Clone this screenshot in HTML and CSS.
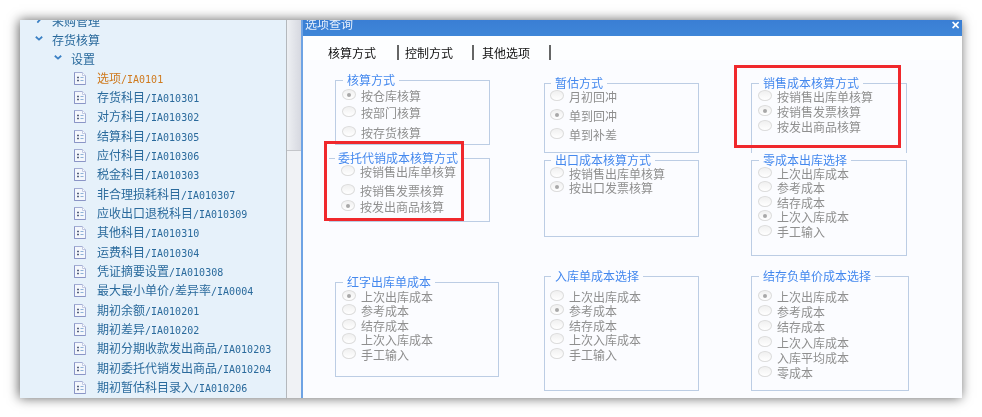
FILE: index.html
```html
<!DOCTYPE html>
<html lang="zh-CN">
<head>
<meta charset="utf-8">
<title>选项查询</title>
<link rel="stylesheet" href="styles.css">
</head>
<body>
<svg class="defs" width="0" height="0" aria-hidden="true">
  <defs>
    <symbol id="leaf" viewBox="0 0 12 13">
      <path d="M.5.5H8.500L11.500 3.500V12.500H.5Z" fill="#f4f7fc" stroke="#a3add4"/>
      <path d="M.5.5V12.500H11.500" fill="none" stroke="#8a95c6"/>
      <path d="M8.500.5V3.500H11.500" fill="#fff" stroke="#c0c8e2"/>
      <path d="M3 5.500H5M3 8.500H5" stroke="#56607c"/>
      <path d="M4 4.500V6.500M4 7.500V9.500" stroke="#56607c"/>
      <path d="M6.500 5.500H9.500M6.500 8.500H9.500" stroke="#8fb2d8"/>
    </symbol>
    <symbol id="chev" viewBox="0 0 8 5">
      <path d="M.8.8L4 3.600 7.200.8" fill="none" stroke="#3b80c4" stroke-width="1.800"/>
    </symbol>
  </defs>
</svg>
<div class="window">
  <nav class="sidebar">
    <ul class="tree">
      <li class="node lv1"><svg class="chev chev-side"><use href="#chev"/></svg><span>采购管理</span></li>
      <li class="node lv1"><svg class="chev"><use href="#chev"/></svg><span>存货核算</span></li>
      <li class="node lv2"><svg class="chev"><use href="#chev"/></svg><span>设置</span></li>
      <li class="node leaf active"><svg class="doc"><use href="#leaf"/></svg><span>选项<span class="code">/IA0101</span></span></li>
      <li class="node leaf"><svg class="doc"><use href="#leaf"/></svg><span>存货科目<span class="code">/IA010301</span></span></li>
      <li class="node leaf"><svg class="doc"><use href="#leaf"/></svg><span>对方科目<span class="code">/IA010302</span></span></li>
      <li class="node leaf"><svg class="doc"><use href="#leaf"/></svg><span>结算科目<span class="code">/IA010305</span></span></li>
      <li class="node leaf"><svg class="doc"><use href="#leaf"/></svg><span>应付科目<span class="code">/IA010306</span></span></li>
      <li class="node leaf"><svg class="doc"><use href="#leaf"/></svg><span>税金科目<span class="code">/IA010303</span></span></li>
      <li class="node leaf"><svg class="doc"><use href="#leaf"/></svg><span>非合理损耗科目<span class="code">/IA010307</span></span></li>
      <li class="node leaf"><svg class="doc"><use href="#leaf"/></svg><span>应收出口退税科目<span class="code">/IA010309</span></span></li>
      <li class="node leaf"><svg class="doc"><use href="#leaf"/></svg><span>其他科目<span class="code">/IA010310</span></span></li>
      <li class="node leaf"><svg class="doc"><use href="#leaf"/></svg><span>运费科目<span class="code">/IA010304</span></span></li>
      <li class="node leaf"><svg class="doc"><use href="#leaf"/></svg><span>凭证摘要设置<span class="code">/IA010308</span></span></li>
      <li class="node leaf"><svg class="doc"><use href="#leaf"/></svg><span>最大最小单价<span class="code">/</span>差异率<span class="code">/IA0004</span></span></li>
      <li class="node leaf"><svg class="doc"><use href="#leaf"/></svg><span>期初余额<span class="code">/IA010201</span></span></li>
      <li class="node leaf"><svg class="doc"><use href="#leaf"/></svg><span>期初差异<span class="code">/IA010202</span></span></li>
      <li class="node leaf"><svg class="doc"><use href="#leaf"/></svg><span>期初分期收款发出商品<span class="code">/IA010203</span></span></li>
      <li class="node leaf"><svg class="doc"><use href="#leaf"/></svg><span>期初委托代销发出商品<span class="code">/IA010204</span></span></li>
      <li class="node leaf"><svg class="doc"><use href="#leaf"/></svg><span>期初暂估科目录入<span class="code">/IA010206</span></span></li>
    </ul>
  </nav>
  <div class="scrollbar"><div class="thumb"></div></div>
  <section class="dialog">
    <header class="titlebar"><span>选项查询</span><span class="close">✕</span></header>
    <div class="tabs">
      <span class="tab tab-a">核算方式</span>
      <span class="tab tab-b">控制方式</span>
      <span class="tab tab-c">其他选项</span>
    </div>
    <div class="panes">
      <div class="col col-a">
        <fieldset class="grp g-method">
          <legend>核算方式</legend>
          <label class="opt on mt2"><i></i>按仓库核算</label>
          <label class="opt mt3"><i></i>按部门核算</label>
          <label class="opt mt6"><i></i>按存货核算</label>
        </fieldset>
        <fieldset class="grp g-consign">
          <legend>委托代销成本核算方式</legend>
          <label class="opt"><i></i>按销售出库单核算</label>
          <label class="opt mt5"><i></i>按销售发票核算</label>
          <label class="opt on mt2"><i></i>按发出商品核算</label>
        </fieldset>
        <fieldset class="grp g-red">
          <legend>红字出库单成本</legend>
          <label class="opt on mt1"><i></i>上次出库成本</label>
          <label class="opt half"><i></i>参考成本</label>
          <label class="opt half"><i></i>结存成本</label>
          <label class="opt half"><i></i>上次入库成本</label>
          <label class="opt half"><i></i>手工输入</label>
        </fieldset>
      </div>
      <div class="col col-b">
        <fieldset class="grp g-est">
          <legend>暂估方式</legend>
          <label class="opt"><i></i>月初回冲</label>
          <label class="opt on mt5"><i></i>单到回冲</label>
          <label class="opt mt5"><i></i>单到补差</label>
        </fieldset>
        <fieldset class="grp g-export">
          <legend>出口成本核算方式</legend>
          <label class="opt"><i></i>按销售出库单核算</label>
          <label class="opt on"><i></i>按出口发票核算</label>
        </fieldset>
        <fieldset class="grp g-in">
          <legend>入库单成本选择</legend>
          <label class="opt mt7"><i></i>上次出库成本</label>
          <label class="opt on half"><i></i>参考成本</label>
          <label class="opt half"><i></i>结存成本</label>
          <label class="opt half"><i></i>上次入库成本</label>
          <label class="opt half"><i></i>手工输入</label>
        </fieldset>
      </div>
      <div class="col col-c">
        <fieldset class="grp g-sale">
          <legend>销售成本核算方式</legend>
          <label class="opt"><i></i>按销售出库单核算</label>
          <label class="opt on mt1"><i></i>按销售发票核算</label>
          <label class="opt mt1"><i></i>按发出商品核算</label>
        </fieldset>
        <fieldset class="grp g-zero">
          <legend>零成本出库选择</legend>
          <label class="opt"><i></i>上次出库成本</label>
          <label class="opt half"><i></i>参考成本</label>
          <label class="opt half"><i></i>结存成本</label>
          <label class="opt on half"><i></i>上次入库成本</label>
          <label class="opt half"><i></i>手工输入</label>
        </fieldset>
        <fieldset class="grp g-neg">
          <legend>结存负单价成本选择</legend>
          <label class="opt on mt7"><i></i>上次出库成本</label>
          <label class="opt mt1"><i></i>参考成本</label>
          <label class="opt mt1"><i></i>结存成本</label>
          <label class="opt mt2"><i></i>上次入库成本</label>
          <label class="opt mt1"><i></i>入库平均成本</label>
          <label class="opt mt1"><i></i>零成本</label>
        </fieldset>
      </div>
    </div>
    <div class="mark mark-left"></div>
    <div class="mark mark-right"></div>
  </section>
</div>
</body>
</html>
```
FILE: styles.css
```css
* { box-sizing: border-box; }
html, body { margin: 0; padding: 0; background: #fff; }
body { height: 417px; overflow: hidden; padding: 20px 20px 19px; font: 12px/14px "Noto Sans CJK SC", "Liberation Sans", sans-serif; }
.defs { position: absolute; }

.window {
  display: flex;
  width: 942px;
  height: 378px;
  box-shadow: -1px 0 11px rgba(0, 0, 0, .62);
  filter: blur(.35px);
}

.sidebar { width: 267px; height: 378px; overflow: hidden; background: #e6f1fa; border-right: 1px solid #b4b8bc; }
.tree { list-style: none; margin: -9px 0 0; padding: 0; }
.node { display: flex; align-items: center; height: 19.33px; color: #2a6a9c; white-space: nowrap; }
.lv1 { padding-left: 15px; gap: 9px; }
.lv2 { padding-left: 34px; gap: 9px; }
.leaf { padding-left: 54px; gap: 11px; }
.active { color: #cf7a1e; }
.chev { width: 8px; height: 5px; margin-top: -3px; }
.chev-side { transform: rotate(-90deg); }
.doc { width: 12px; height: 13px; flex: none; margin-top: -1px; }
.code { font: 10px/14px "DejaVu Sans Mono", monospace; }

.scrollbar { width: 14px; height: 378px; background: #f0f2f5; }
.thumb { height: 131px; background: linear-gradient(90deg, #eef0f3, #d6d8e0); border-bottom: 1px solid #c4c6ca; }

.dialog { position: relative; width: 661px; height: 378px; background: #fbfcff; border-left: 2px solid #6ea3e4; }
.titlebar { display: flex; justify-content: space-between; height: 16px; overflow: hidden; padding: 0 2px; background: linear-gradient(#3a7ed4, #3f86d8); color: #e4eefb; line-height: 8px; }
.close { color: #fff; font-weight: 700; font-size: 11px; }

.tabs { display: flex; height: 24px; padding: 9px 0 0 25px; background: #fdfeff; color: #111; }
.tab { height: 15px; line-height: 15px; border-right: 2px solid #666; }
.tab-a { width: 71px; }
.tab-b { width: 69px; margin-left: 6px; }
.tab-c { width: 69px; margin-left: 8px; }

.panes { display: flex; padding-left: 32px; }
.col { display: flex; flex-direction: column; align-items: flex-start; }
.col-a { width: 209px; padding-top: 13px; }
.col-b { width: 207px; padding-top: 16px; }
.col-c { padding-top: 16px; }

.grp { display: flex; flex-direction: column; margin: 0; padding: 0 0 0 6px; border: 1px solid #bccde4; }
.grp legend { padding: 0 4px; margin-left: 1px; color: #4488ee; line-height: 14px; }
.col-b .grp { padding-left: 5px; }
.opt { display: flex; align-items: center; gap: 5px; height: 14px; color: #8f8f8f; white-space: nowrap; }
.opt i { position: relative; width: 14px; height: 11px; margin-top: -3px; border: 1px solid #dcdcdc; border-radius: 50%; background: linear-gradient(#f0f0f0, #fff); flex: none; }
.on i::after { content: ""; position: absolute; left: 4px; top: 2.500px; width: 4px; height: 4px; border-radius: 50%; background: #a8a8a8; }
.half { margin-top: .45px; }
.mt1 { margin-top: 1px; }
.mt2 { margin-top: 2px; }
.mt3 { margin-top: 3px; }
.mt5 { margin-top: 5px; }
.mt6 { margin-top: 6px; }
.mt7 { margin-top: 7px; }

.g-method { width: 155px; height: 72px; }
.g-consign { width: 161px; height: 71px; margin: 6px 0 0 -6px; padding-left: 12px; border-left: 0; }
.g-consign legend { margin-left: -6px; padding: 0 3px; }
.g-red { width: 164px; height: 102px; margin-top: 53px; }
.g-est { width: 155px; height: 77px; }
.g-export { width: 155px; height: 84px; }
.g-in { width: 155px; height: 122px; margin-top: 32px; }
.g-sale { width: 156px; height: 77px; border-bottom: 0; }
.g-zero { width: 156px; height: 103px; }
.g-neg { width: 158px; height: 122px; margin-top: 13px; }

.mark { position: absolute; border: 3px solid #f0282c; }
.mark-left { left: 21px; top: 121px; width: 140px; height: 80px; }
.mark-right { left: 431px; top: 45px; width: 167px; height: 83px; }
```
